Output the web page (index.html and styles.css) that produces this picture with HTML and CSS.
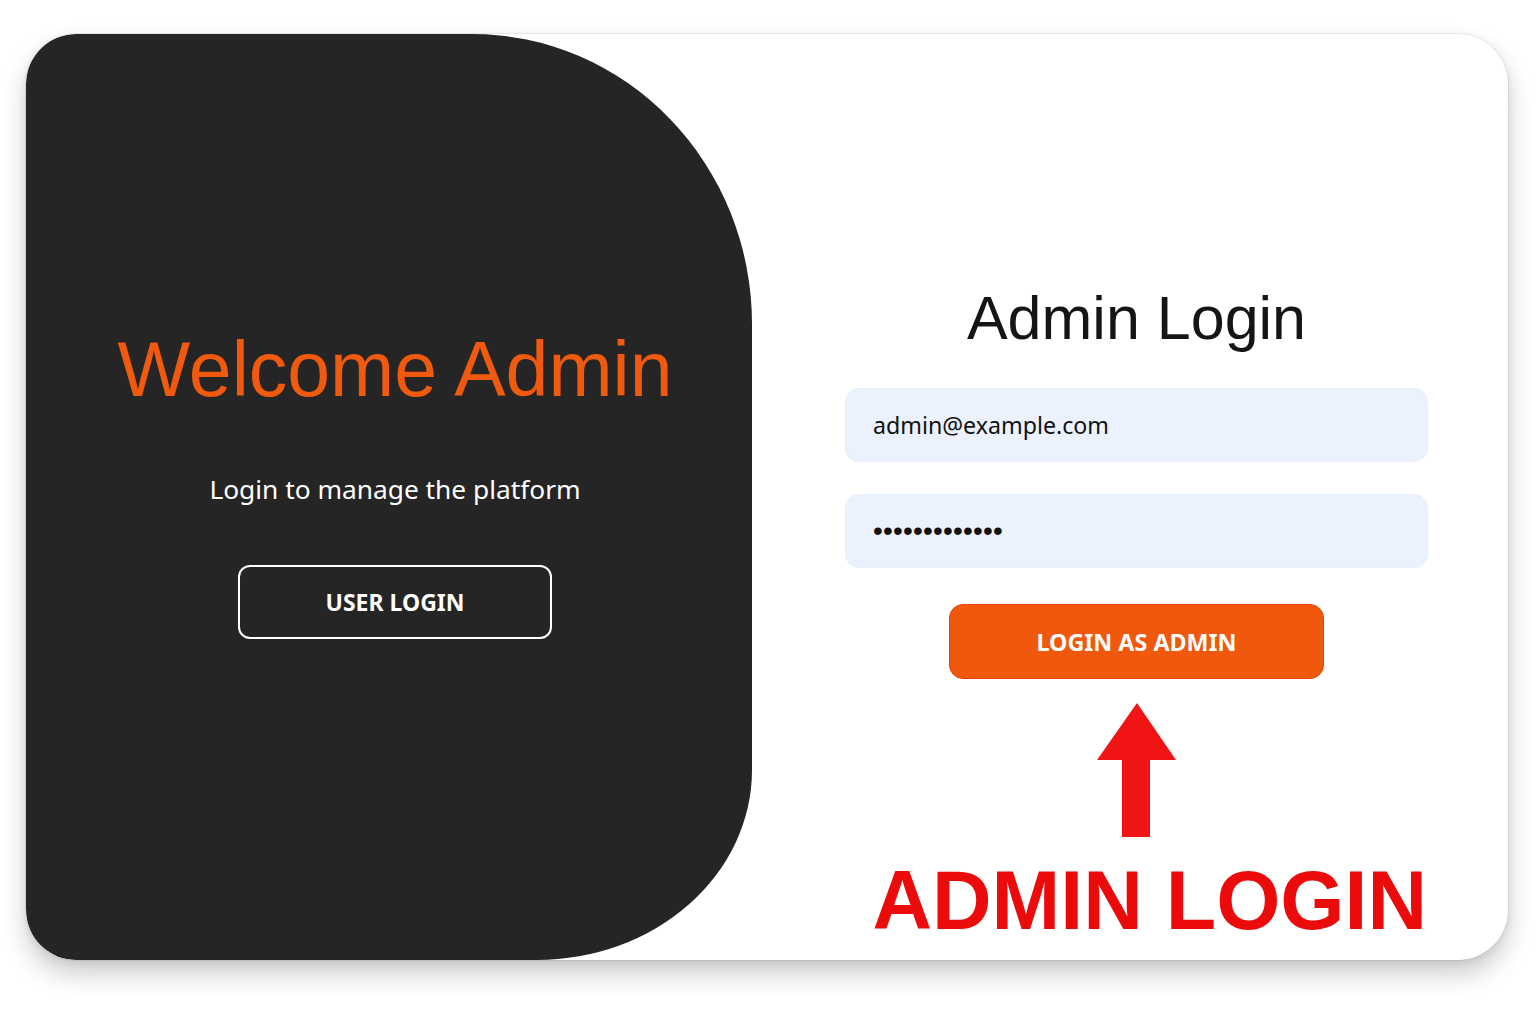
FILE: index.html
```html
<!DOCTYPE html>
<html lang="en">
<head>
<meta charset="utf-8">
<title>Admin Login</title>
<link rel="stylesheet" href="styles.css">
</head>
<body>
<div class="card">
  <section class="welcome">
    <h1 class="welcome-title">Welcome Admin</h1>
    <p class="welcome-sub">Login to manage the platform</p>
    <button class="btn-outline" type="button">USER LOGIN</button>
  </section>
  <section class="login">
    <form class="form">
      <h2 class="login-title">Admin Login</h2>
      <input class="field" type="email" value="admin@example.com">
      <input class="field field-pass" type="password" value="adminpassword">
      <button class="btn-primary" type="button">LOGIN AS ADMIN</button>
      <svg class="arrow" width="79" height="134" viewBox="0 0 79 134" aria-hidden="true">
        <polygon points="40,0 79,57 53,57 53,134 25,134 25,57 0,57" fill="#f01414"/>
      </svg>
      <div class="callout">ADMIN LOGIN</div>
    </form>
  </section>
</div>
</body>
</html>
```

FILE: styles.css
```css
* { box-sizing: border-box; }

html, body {
  margin: 0;
  background: #ffffff;
}

body {
  min-height: 1024px;
  padding: 34px 28px 64px 26px;
  font-family: "Noto Sans", "Open Sans", sans-serif;
}

.card {
  display: flex;
  height: 926px;
  background: #ffffff;
  border-radius: 50px;
  overflow: hidden;
  box-shadow: 0 14px 26px rgba(0, 0, 0, 0.2), 0 2px 8px rgba(0, 0, 0, 0.08), 0 0 0 1px rgba(0, 0, 0, 0.05);
}

.welcome {
  flex: none;
  width: 726px;
  background: #252525;
  border-radius: 50px 280px 215px 50px / 50px 290px 190px 50px;
  display: flex;
  flex-direction: column;
  align-items: center;
  padding: 297px 0 0 12px;
}

.welcome-title {
  margin: 0;
  font-family: "Liberation Sans", Arial, sans-serif;
  font-weight: 400;
  font-size: 77px;
  line-height: 76px;
  color: #f05a0e;
  white-space: nowrap;
}

.welcome-sub {
  margin: 67px 0 0;
  font-size: 26.3px;
  line-height: 30px;
  color: #ffffff;
  white-space: nowrap;
}

.btn-outline {
  margin-top: 61px;
  width: 314px;
  height: 74px;
  border: 2px solid #ffffff;
  border-radius: 12px;
  background: transparent;
  color: #ffffff;
  font-family: "Noto Sans", sans-serif;
  font-weight: 700;
  font-size: 23px;
}

.login {
  flex: 1;
  padding: 254px 0 0 93px;
}

.form {
  width: 583px;
  display: flex;
  flex-direction: column;
  align-items: center;
}

.login-title {
  margin: 0 0 39px;
  font-family: "Liberation Sans", Arial, sans-serif;
  font-weight: 400;
  font-size: 61px;
  line-height: 61px;
  color: #151515;
}

.field {
  width: 100%;
  height: 74px;
  margin: 0 0 32px;
  padding: 0 27px;
  border: 1px solid #e6eefb;
  border-radius: 14px;
  background: #ebf2fe;
  font-family: "Noto Sans", sans-serif;
  font-size: 23.2px;
  color: #111111;
  outline: none;
}

.field-pass {
  margin-bottom: 36px;
  font-family: "Liberation Sans", Arial, sans-serif;
  font-size: 28px;
  letter-spacing: 0.2px;
}

.btn-primary {
  width: 375px;
  height: 75px;
  border: 1.5px solid #ec3f0a;
  border-radius: 14px;
  background: #f0590d;
  color: #ffffff;
  font-family: "Noto Sans", sans-serif;
  font-weight: 700;
  font-size: 23.3px;
}

.arrow {
  display: block;
  margin-top: 24px;
}

.callout {
  align-self: stretch;
  text-align: right;
  margin-top: 22px;
  padding-right: 1px;
  font-family: "Liberation Sans", Arial, sans-serif;
  font-weight: 700;
  font-size: 82.5px;
  line-height: 82px;
  color: #ec0b0b;
  white-space: nowrap;
}
```
